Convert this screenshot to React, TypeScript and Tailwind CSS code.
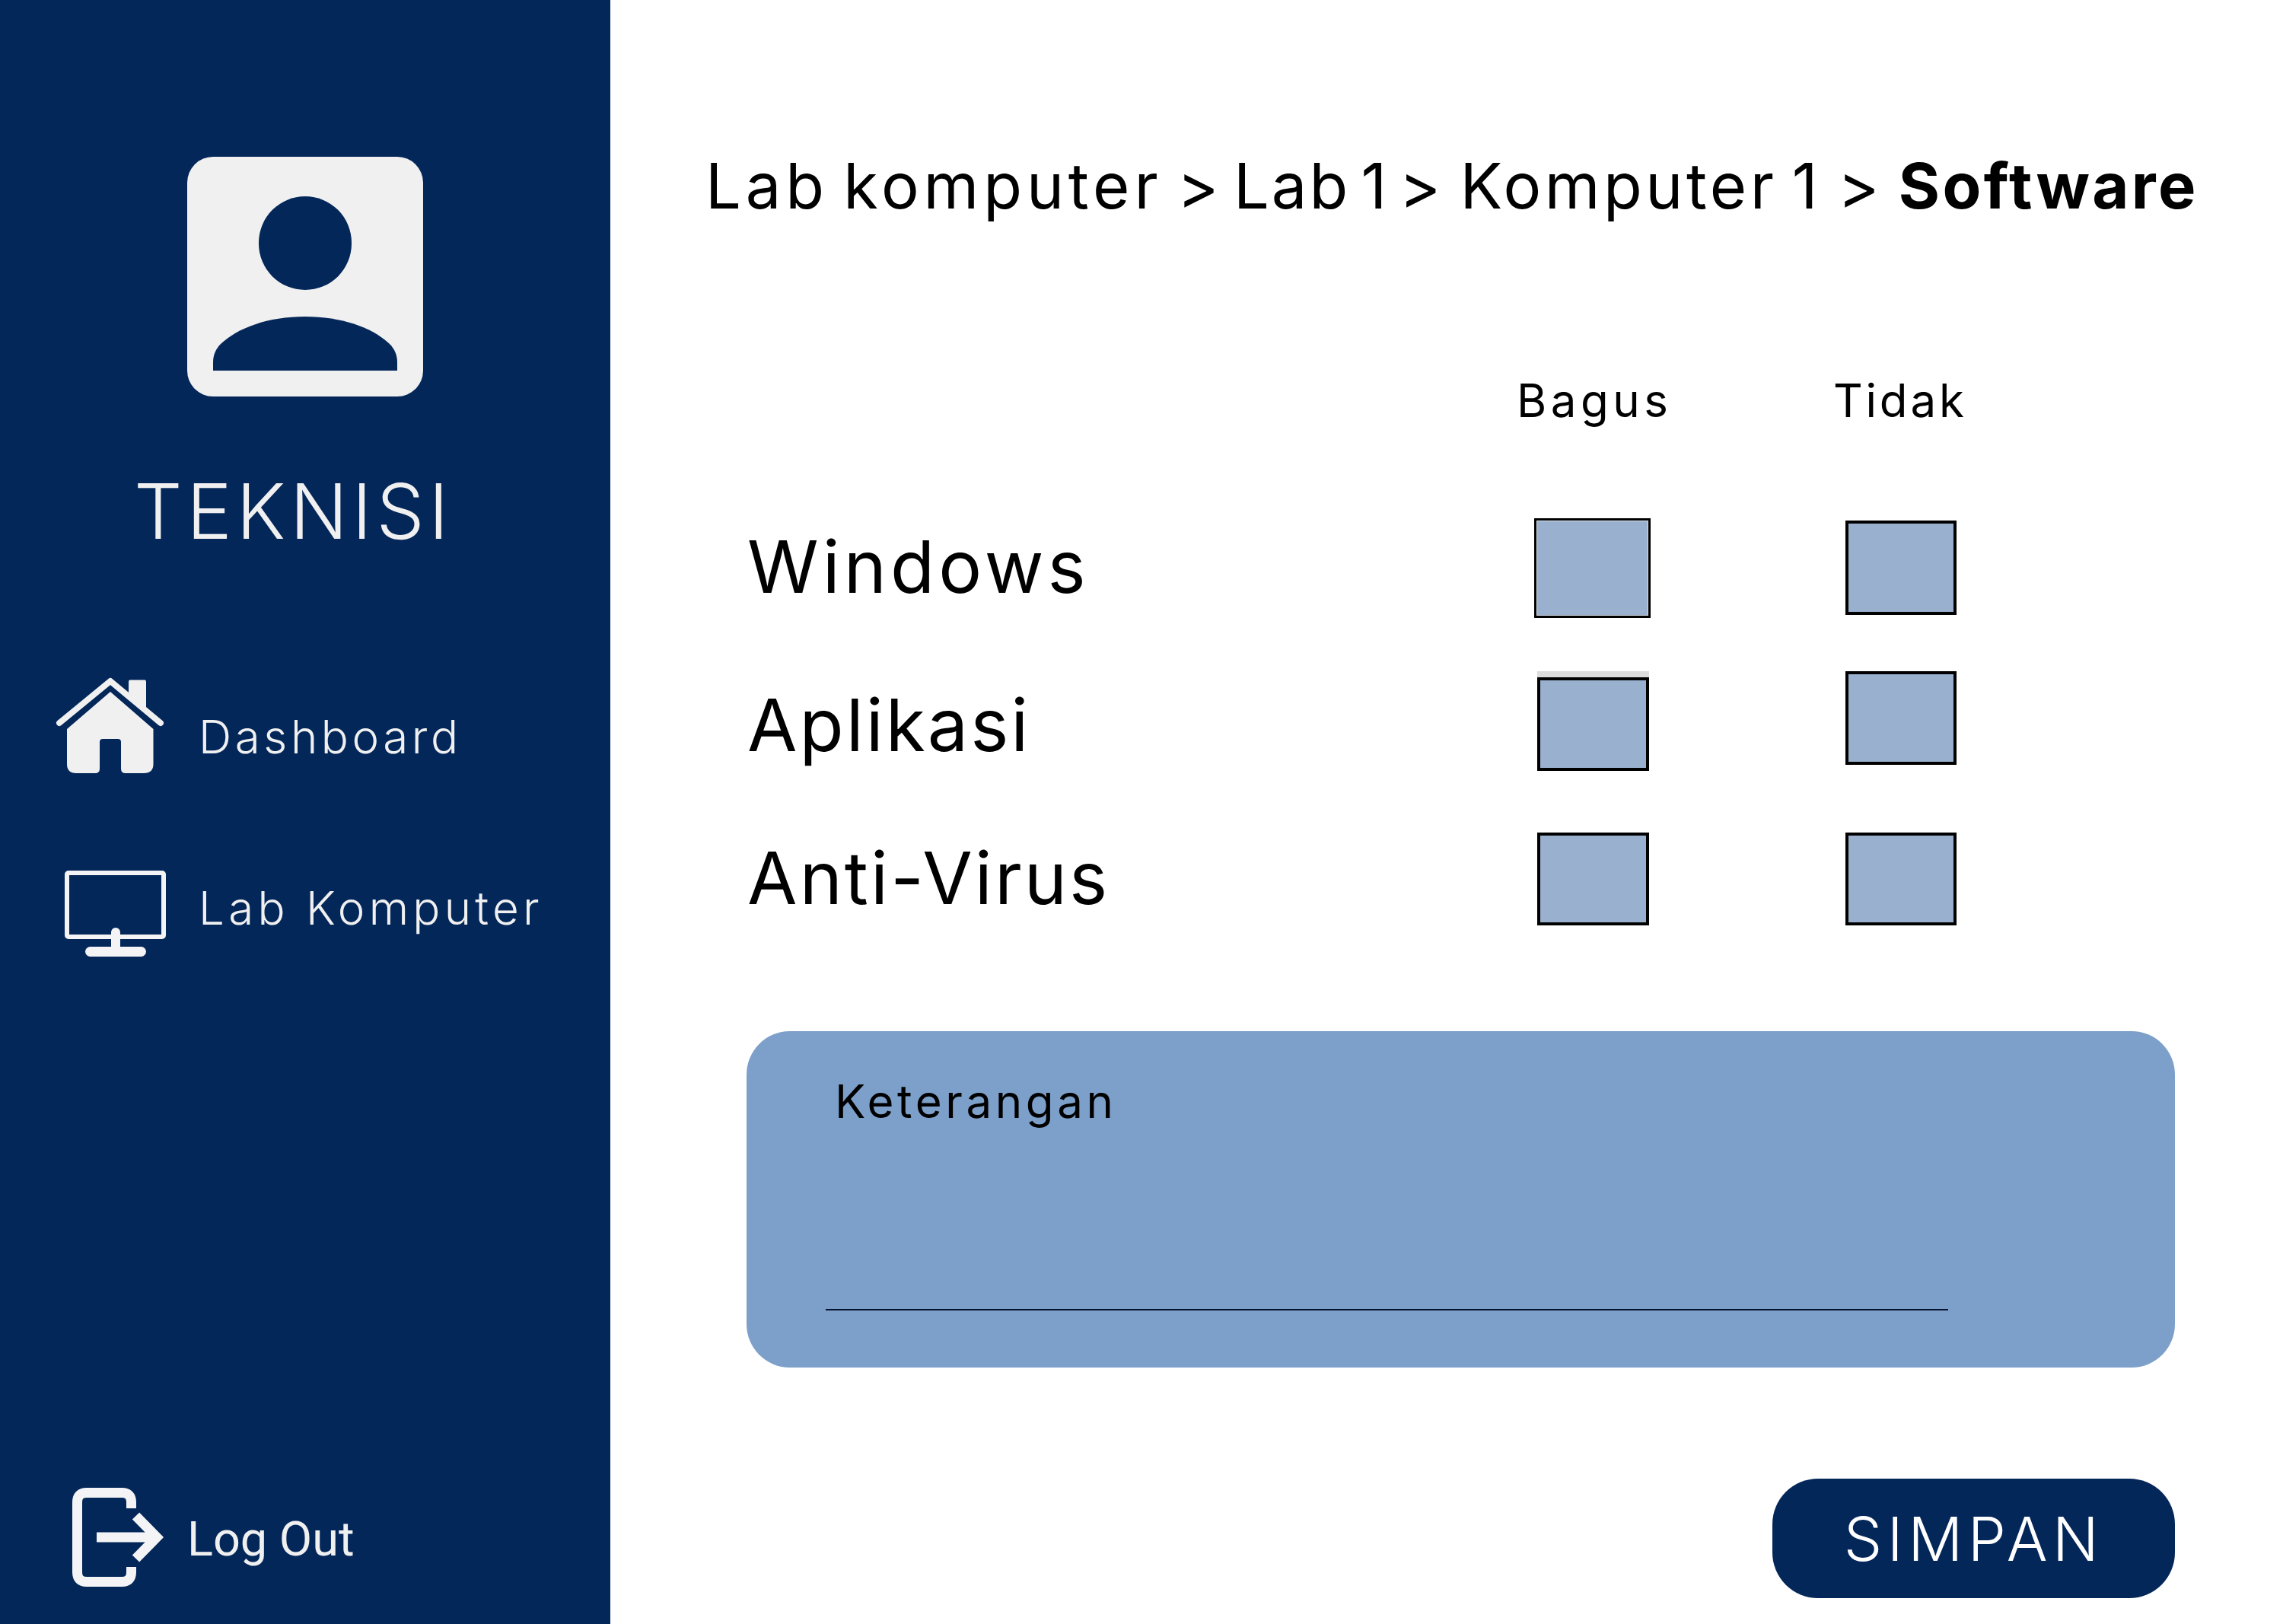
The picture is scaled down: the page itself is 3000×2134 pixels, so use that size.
import React from 'react';

const navy = 'bg-[#04275a]';

function HouseIcon() {
	return (
		<svg width="142" height="126" viewBox="0 0 142 126" className="shrink-0">
			<path d="M96 5.5a2 2 0 0 1 2-2h19a2 2 0 0 1 2 2V45L96 20Z" fill="#f0f0f0" />
			<path d="M5 60 72 5 138 60" fill="none" stroke="#f0f0f0" strokeWidth="8" strokeLinecap="round" strokeLinejoin="round" />
			<path
				d="M72 19 128.500 68V114Q128.500 126 116 126H92Q86 126 86 120V85Q86 81 82 81H62Q58 81 58 85V120Q58 126 52 126H27Q15 126 15 114V68Z"
				fill="#f0f0f0"
			/>
		</svg>
	);
}

function MonitorIcon() {
	return (
		<svg width="133" height="113" viewBox="0 0 133 113" className="shrink-0">
			<rect x="3" y="3" width="127" height="84" rx="2" fill="none" stroke="#f4f4f6" strokeWidth="6" />
			<path d="M61 81a6 6 0 0 1 12 0V102H61Z" fill="#f4f4f6" />
			<rect x="27" y="100" width="80" height="13" rx="6.500" fill="#f4f4f6" />
		</svg>
	);
}

function LogOutIcon() {
	return (
		<svg width="120" height="130" viewBox="0 0 120 130" className="shrink-0">
			<path
				d="M77.500 27V19Q77.500 6.500 65 6.500H19Q6.500 6.500 6.500 19V111Q6.500 123.500 19 123.500H65Q77.500 123.500 77.500 111V104"
				fill="none"
				stroke="#f4f4f6"
				strokeWidth="13"
			/>
			<path d="M32 65H108" fill="none" stroke="#f4f4f6" strokeWidth="13" />
			<path d="M83.500 37 111 65 83.500 93" fill="none" stroke="#f4f4f6" strokeWidth="13" />
		</svg>
	);
}

function Box({ className = '' }: { className?: string }) {
	return <div className={`bg-[#99b1ce] border-black ${className}`} />;
}

export default function App() {
	return (
		<div className="flex w-[3000px] h-[2134px] bg-white overflow-hidden font-['Inter',sans-serif] text-black">
			{/* Sidebar */}
			<aside className={`w-[802px] h-full shrink-0 flex flex-col ${navy}`}>
				<div className="ml-[246px] mt-[206px] w-[310px] h-[315px] rounded-[34px] bg-[#f0f0f0] flex flex-col items-center">
					<div className={`mt-[52px] w-[122px] h-[123px] rounded-full ${navy}`} />
					<svg width="242" height="71" viewBox="0 0 242 71" className="mt-[35px]">
						<path d="M0 71V60C0 50 4 42 10 36 32 15 72 0 121 0 170 0 210 15 232 36 238 42 242 50 242 60V71Z" fill="#04275a" />
					</svg>
				</div>

				<div className="ml-[176px] mt-[105px] h-[92px] leading-[92px] text-[100px] font-light tracking-[5.7px] text-[#f0f0f0]">TEKNISI</div>

				<div className="ml-[73px] mt-[172px] h-[126px] flex items-center">
					<HouseIcon />
					<span className="ml-[46px] mt-[29px] text-[60px] font-light tracking-[4.6px] text-[#f0f0f0] leading-none">Dashboard</span>
				</div>

				<div className="ml-[85px] mt-[128px] h-[113px] flex items-center">
					<MonitorIcon />
					<span className="ml-[43px] mt-[-16px] text-[60px] font-light tracking-[5.3px] text-[#f0f0f0] leading-none">Lab Komputer</span>
				</div>

				<div className="ml-[95px] mt-auto mb-[49px] h-[130px] flex items-center">
					<LogOutIcon />
					<span className="ml-[31px] mt-[5px] font-['Roboto',sans-serif] text-[63px] text-[#f0f0f0] leading-none">Log Out</span>
				</div>
			</aside>

			{/* Main */}
			<main className="flex-1 flex flex-col pl-[130px]">
				<h1 className="mt-[194px] ml-[-5px] h-[100px] leading-[100px] text-[83px] font-normal whitespace-nowrap tracking-[5.9px] [word-spacing:-10px]">
					Lab komputer <span className="tracking-[-0.1px]">&gt;</span> <span className="tracking-[3px]">Lab</span>{' '}
					<span className="ml-[-5px] tracking-[-3px]">1</span> &gt; <span className="tracking-[4.5px]">Komputer</span>{' '}
					<span className="tracking-[7px]">1</span> &gt; <span className="font-bold tracking-[3.4px]">Software</span>
				</h1>

				<div className="mt-[202px] ml-[1061px] flex h-[60px] items-center text-[60px] leading-none">
					<span className="w-[416px] tracking-[5.5px]">Bagus</span>
					<span className="tracking-[3.8px]">Tidak</span>
				</div>

				<div className="mt-[125px] ml-[50px] flex h-[131px]">
					<span className="w-[1034px] mt-[9px] text-[95px] leading-[110px] tracking-[5.1px]">Windows</span>
					<Box className="w-[153px] h-[131px] border-[3px] shadow-[inset_0_0_0_1px_#dfe6ef]" />
					<Box className="ml-[256px] mt-[3px] w-[146px] h-[124px] border-4" />
				</div>

				<div className="mt-[70px] ml-[50px] flex h-[131px]">
					<span className="w-[1038px] mt-[16px] text-[95px] leading-[110px] tracking-[3px]">Aplikasi</span>
					<div className="w-[147px] border-t-8 border-[#dcdcdc]">
						<Box className="w-full h-[123px] border-4" />
					</div>
					<Box className="ml-[258px] w-[146px] h-[123px] border-4" />
				</div>

				<div className="mt-[81px] ml-[50px] flex h-[122px]">
					<span className="w-[1038px] mt-[5px] text-[95px] leading-[110px] tracking-[3.100px]">Anti-Virus</span>
					<Box className="w-[147px] border-4" />
					<Box className="ml-[258px] w-[146px] border-4" />
				</div>

				<section className="mt-[139px] ml-[49px] w-[1877px] h-[442px] rounded-[57px] bg-[#7da0ca] flex flex-col">
					<span className="mt-[57px] ml-[116px] text-[60px] leading-[70px] tracking-[4.6px]">Keterangan</span>
					<div className="mt-[238px] ml-[104px] w-[1475px] h-[2px] bg-[#03112b]" />
				</section>

				<button className={`mt-[146px] ml-[1397px] w-[529px] h-[157px] rounded-[60px] ${navy} text-white text-[80px] font-light leading-none tracking-[6.5px]`}>
					SIMPAN
				</button>
			</main>
		</div>
	);
}
